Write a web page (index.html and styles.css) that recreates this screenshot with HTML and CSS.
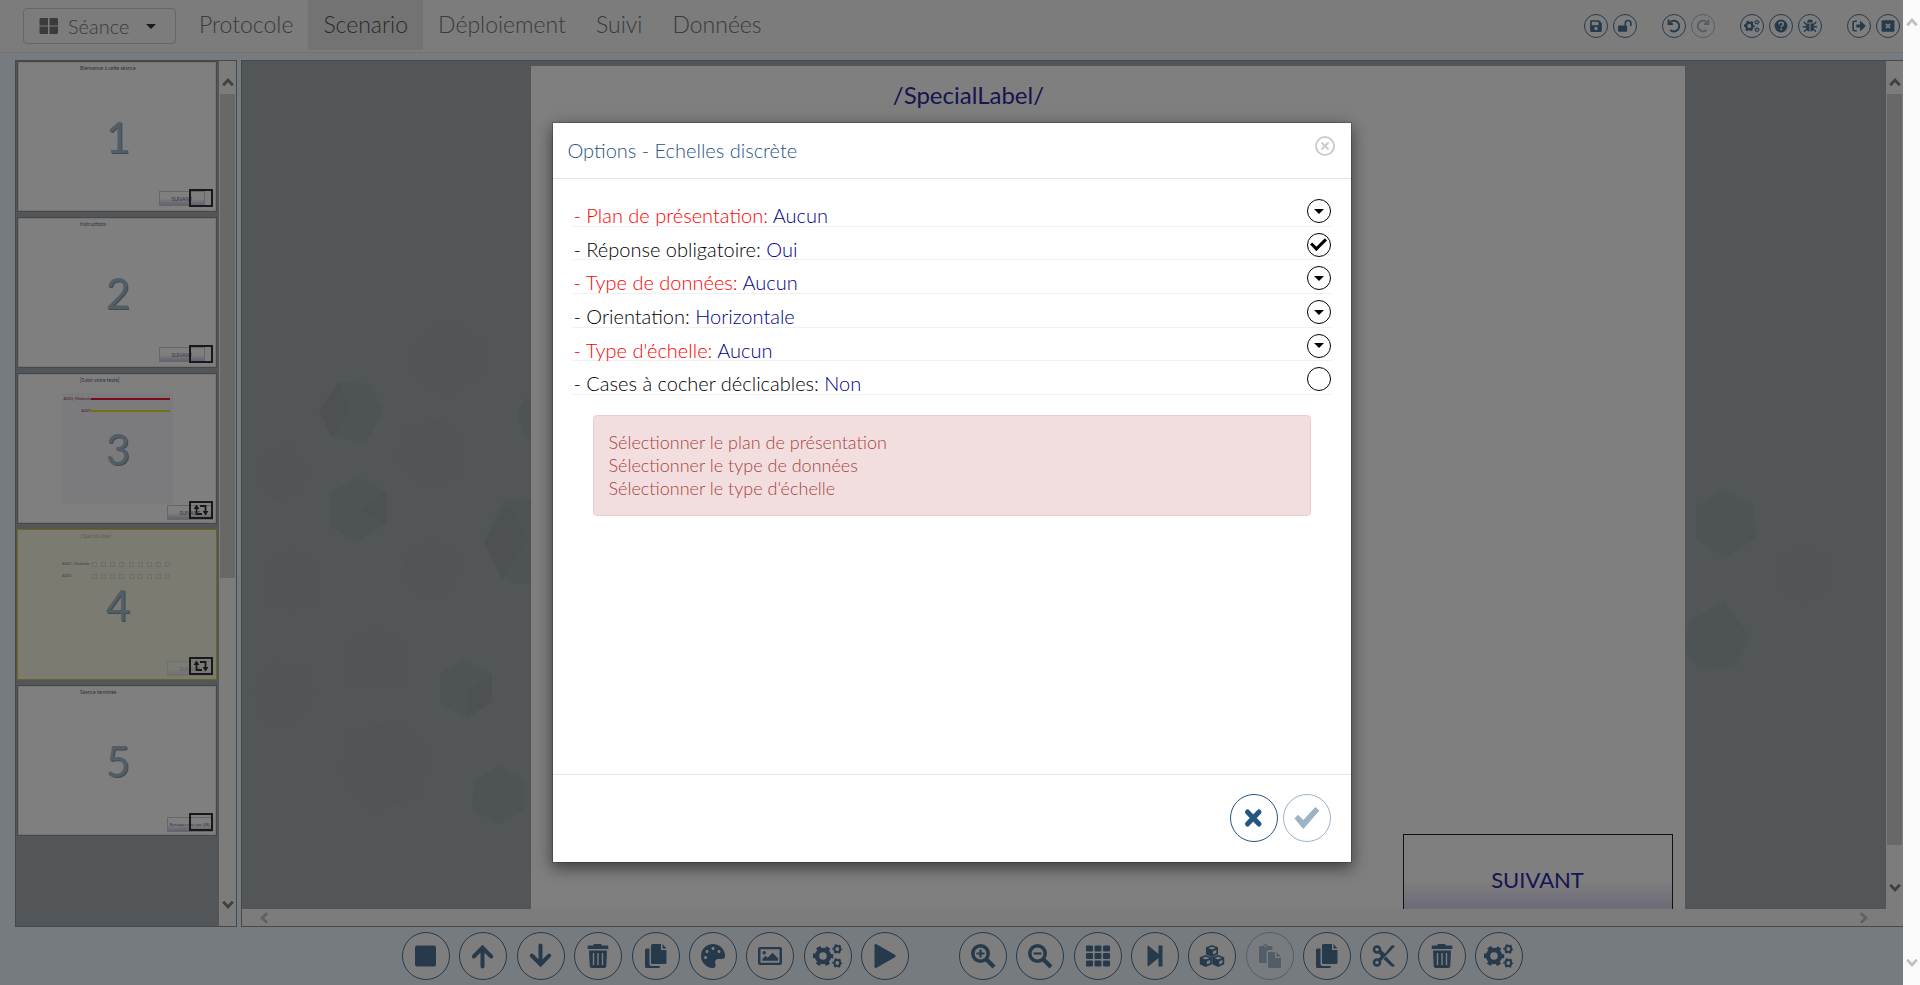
FILE: index.html
```html
<!DOCTYPE html>
<html lang="fr">
<head>
<meta charset="utf-8">
<meta name="viewport" content="width=device-width, initial-scale=1">
<title>Scenario</title>
<link rel="stylesheet" href="styles.css">
</head>
<body>
<svg class="sprite" aria-hidden="true">
  <symbol id="i-square" viewBox="0 0 30 30"><rect x="4" y="4.500" width="21" height="21" rx="2"/></symbol>
  <symbol id="i-up" viewBox="0 0 30 30"><path class="line" d="M14.500 25.500V7M5.800 15.500l8.700-8.800 8.700 8.800"/></symbol>
  <symbol id="i-down" viewBox="0 0 30 30"><path class="line" d="M14.500 4.500V23M5.800 14.500l8.700 8.800 8.700-8.800"/></symbol>
  <symbol id="i-trash" viewBox="0 0 30 30"><path fill-rule="evenodd" d="M11 3h7l1 1.500h5.500q.8 0 .8.800V8H4.700V5.300q0-.8.8-.8H10zM6 9.500h18L23.300 25q-.1 2-2 2H8.700q-1.900 0-2-2zM9.800 12v12h1.400V12zM14.300 12v12h1.400V12zM18.800 12v12h1.400V12z"/></symbol>
  <symbol id="i-copy" viewBox="0 0 30 30"><path d="M11.500 3H20v6h5.500v12.500q0 1.500-1.500 1.500H11.500q-1.500 0-1.500-1.500v-17Q10 3 11.500 3zM21.500 3l4 4.500h-4zM5.500 7.500H8.500V23q0 2 2 2h8.500v.500q0 1.500-1.500 1.500h-12Q4 27 4 25.500V9q0-1.500 1.500-1.500z"/></symbol>
  <symbol id="i-palette" viewBox="0 0 30 30"><path transform="translate(3 3) scale(.047)" d="M204.300 5C104.900 24.400 24.800 104.300 5.200 203.400c-37 187 131.700 326.400 258.800 306.700 41.200-6.400 61.400-54.600 42.500-91.700-23.100-45.400 9.900-98.400 60.900-98.400h79.700c35.800 0 64.800-29.600 64.900-65.300C511.500 97.100 368.100-26.900 204.300 5zM96 320c-17.700 0-32-14.300-32-32s14.300-32 32-32 32 14.300 32 32-14.300 32-32 32zm32-128c-17.700 0-32-14.300-32-32s14.300-32 32-32 32 14.300 32 32-14.300 32-32 32zm128-64c-17.700 0-32-14.300-32-32s14.300-32 32-32 32 14.300 32 32-14.300 32-32 32zm128 64c-17.700 0-32-14.300-32-32s14.300-32 32-32 32 14.300 32 32-14.300 32-32 32z"/></symbol>
  <symbol id="i-image" viewBox="0 0 30 30"><path fill-rule="evenodd" d="M5 6h20q2 0 2 2v14q0 2-2 2H5q-2 0-2-2V8q0-2 2-2zm.500 2.300v13.400h19V8.300z"/><circle cx="9.200" cy="11.800" r="1.800"/><path d="M7.500 19.800v-2l3-3 2 2 5-5 5.500 5.500v2.500z"/></symbol>
  <symbol id="i-gears" viewBox="0 0 30 30"><g fill="none" stroke="currentColor"><circle cx="10" cy="15" r="6" stroke-width="4.500"/><circle cx="10" cy="15" r="8.800" stroke-width="3" stroke-dasharray="4.400 4.815" stroke-dashoffset="2.200"/><circle cx="24.300" cy="8" r="2.900" stroke-width="2"/><circle cx="24.300" cy="8" r="4.200" stroke-width="1.500" stroke-dasharray="2 2.398" stroke-dashoffset="1"/><circle cx="24.300" cy="22" r="2.900" stroke-width="2"/><circle cx="24.300" cy="22" r="4.200" stroke-width="1.500" stroke-dasharray="2 2.398" stroke-dashoffset="1"/></g></symbol>
  <symbol id="i-play" viewBox="0 0 30 30"><path d="M4.500 4.500Q4.500 2.500 6.500 3.300L25 13.800q1.600 1.200 0 2.400L6.500 26.700q-2 .8-2-1.200z"/></symbol>
  <symbol id="i-zoomin" viewBox="0 0 30 30"><circle cx="12.500" cy="12.500" r="7.700" fill="none" stroke="currentColor" stroke-width="3.600"/><path d="M18 18l8 8" stroke="currentColor" stroke-width="4.200"/><path d="M12.500 8.500v8M8.500 12.500h8" stroke="currentColor" stroke-width="2.200"/></symbol>
  <symbol id="i-zoomout" viewBox="0 0 30 30"><circle cx="12.500" cy="12.500" r="7.700" fill="none" stroke="currentColor" stroke-width="3.600"/><path d="M18 18l8 8" stroke="currentColor" stroke-width="4.200"/><path d="M8.500 12.500h8" stroke="currentColor" stroke-width="2.200"/></symbol>
  <symbol id="i-grid" viewBox="0 0 30 30"><g><rect x="3" y="4.500" width="7" height="6" rx="1"/><rect x="11.500" y="4.500" width="7" height="6" rx="1"/><rect x="20" y="4.500" width="7" height="6" rx="1"/><rect x="3" y="12" width="7" height="6" rx="1"/><rect x="11.500" y="12" width="7" height="6" rx="1"/><rect x="20" y="12" width="7" height="6" rx="1"/><rect x="3" y="19.500" width="7" height="6" rx="1"/><rect x="11.500" y="19.500" width="7" height="6" rx="1"/><rect x="20" y="19.500" width="7" height="6" rx="1"/></g></symbol>
  <symbol id="i-step" viewBox="0 0 30 30"><path d="M7.500 5.500q0-1.500 1.300-.6L18.500 13V4.500h4v21h-4V17L8.800 25.100q-1.300.9-1.300-.6z"/></symbol>
  <symbol id="i-cubes" viewBox="0 0 30 30"><path fill-rule="evenodd" d="M15 4l6 2.300v6.900L15 16l-6-2.800V6.300zm0 1.700L11.200 7.100 15 8.500l3.800-1.400zM16 10.300v3.300l3.300-1.500V9z"/><path fill-rule="evenodd" d="M8.800 14l6 2.300v6.900l-6 2.800-6-2.800v-6.900zm0 1.700L5 17.100l3.800 1.400 3.800-1.400zM9.800 20.300v3.300l3.300-1.500V19z"/><path fill-rule="evenodd" d="M21.200 14l6 2.300v6.900l-6 2.800-6-2.800v-6.900zm0 1.700l-3.800 1.400 3.800 1.400 3.800-1.400zM22.200 20.300v3.300l3.300-1.500V19z"/></symbol>
  <symbol id="i-paste" viewBox="0 0 30 30"><path d="M5.500 5H8q.5-2 2.500-2T13 5h3q1.500 0 1.500 1.500V9H14q-2.500 0-2.500 2.500V22h-6Q4 22 4 20.500v-14Q4 5 5.500 5zM10.500 4.200a1 1 0 1 0 .01 0z" fill-rule="evenodd"/><path d="M14.500 11H20v6h6v8.500q0 1.500-1.500 1.500h-10q-1.500 0-1.500-1.500v-13q0-1.500 1.500-1.500zM21.500 11l4.500 4.500h-4.500z"/></symbol>
  <symbol id="i-cut" viewBox="0 0 30 30"><g fill="none" stroke="currentColor"><circle cx="8" cy="8.500" r="3" stroke-width="2.600"/><circle cx="8" cy="21.500" r="3" stroke-width="2.600"/></g><path d="M9 11.500L12 9l4 3.500L22 5q2-1.500 4 0L11.500 20.500 9 18.500l3-3.500zM17 15.500l9 9.500q-2 1.500-4 0l-7.500-7z"/></symbol>
  <symbol id="i-save" viewBox="0 0 30 30"><path transform="translate(4 2.500) scale(.049)" d="M433.900 129.900l-83.900-83.900A48 48 0 0 0 316.100 32H48C21.500 32 0 53.500 0 80v352c0 26.500 21.500 48 48 48h352c26.500 0 48-21.500 48-48V163.900a48 48 0 0 0-14.100-34zM224 416c-35.300 0-64-28.700-64-64s28.700-64 64-64 64 28.700 64 64-28.700 64-64 64zm96-304.500V212c0 6.600-5.400 12-12 12H76c-6.600 0-12-5.400-12-12V108c0-6.600 5.400-12 12-12h228.500c3.200 0 6.200 1.300 8.500 3.500l3.500 3.500a12 12 0 0 1 3.500 8.500z"/></symbol>
  <symbol id="i-unlock" viewBox="0 0 30 30"><rect x="2" y="14" width="17" height="12" rx="2"/><path d="M15.500 15v-5a5.200 5.200 0 0 1 10.500 0v4" fill="none" stroke="currentColor" stroke-width="3" stroke-linecap="round"/></symbol>
  <symbol id="i-undo" viewBox="0 0 30 30"><path d="M7 9a10 10 0 1 1 1 13.500" fill="none" stroke="currentColor" stroke-width="3.600"/><path d="M3 3h3.500v6.500H13V13H3z"/></symbol>
  <symbol id="i-redo" viewBox="0 0 30 30"><path d="M23 9a10 10 0 1 0-1 13.500" fill="none" stroke="currentColor" stroke-width="3.600"/><path d="M27 3h-3.500v6.500H17V13h10z"/></symbol>
  <symbol id="i-help" viewBox="0 0 30 30"><circle cx="15" cy="15" r="12"/><path class="cut" d="M10.800 12q.5-4 4.500-4 4 0 4 3.500 0 2-2.200 3.200-1.800 1-1.800 2.500"/><circle class="hole" cx="15.200" cy="21.200" r="2"/></symbol>
  <symbol id="i-bug" viewBox="0 0 30 30"><path d="M9.500 8.500a5.500 5.500 0 0 1 11 0zM8 10.500h6v15q-6-.5-6-7zM16 10.500h6v8q0 6.500-6 7z"/><path d="M8.500 12.500L4 8M21.500 12.500L26 8M9 16.500H2.500M21 16.500h6.500M9 20.500L4.500 25M21 20.500l4.500 4.500" stroke="currentColor" stroke-width="2.600" stroke-linecap="round"/></symbol>
  <symbol id="i-exit" viewBox="0 0 30 30"><path d="M11 6H6.500Q4 6 4 8.500v13Q4 24 6.500 24H11" fill="none" stroke="currentColor" stroke-width="3"/><path d="M10 12h7V6.500q0-2 1.600-.6L27 14q1 1 0 2l-8.400 8.100q-1.600 1.400-1.600-.6V18h-7z"/></symbol>
  <symbol id="i-close" viewBox="0 0 30 30"><rect x="3" y="4" width="24" height="22" rx="2"/><path class="cut" d="M11 11l8 8M19 11l-8 8"/></symbol>
  <symbol id="i-times" viewBox="0 0 30 30"><path d="M8.500 9l11.500 12M20 9L8.500 21" stroke="currentColor" stroke-width="5" stroke-linecap="round"/></symbol>
  <symbol id="i-check" viewBox="0 0 30 30"><path d="M3 15.500l3-3.200 5.300 5.300L23.500 4.500l3.300 3.200L11.300 25.500z" stroke="currentColor" stroke-linejoin="round"/></symbol>
  <symbol id="i-chevron" viewBox="0 0 12 10"><path d="M1.200 8.200L6 3l4.800 5.200" fill="none" stroke="currentColor" stroke-width="2.800"/></symbol>
  <symbol id="i-loop" viewBox="0 0 18 14"><path d="M4.500 5v6H10M8 3h5.500v6" fill="none" stroke="currentColor" stroke-width="1.800"/><path d="M4.500 1.500L7.500 6h-6zM13.500 12.500l-3-4.500h6z"/></symbol>
  <symbol id="i-windows" viewBox="0 0 20 16"><path d="M1.500 0H9v7.500H.500V1zM10.500 0H18l1 1v6.500h-8.500zM.500 8.500H9V16H1.500l-1-1zM10.500 8.500H19V15l-1 1h-7.500z"/></symbol>
</svg>

<div class="app">
  <header class="navbar">
    <button class="session" type="button"><svg class="icon-win"><use href="#i-windows"/></svg><span>Séance</span><span class="caret"></span></button>
    <nav class="menu">
      <a href="#protocole">Protocole</a>
      <a href="#scenario" class="active">Scenario</a>
      <a href="#deploiement">Déploiement</a>
      <a href="#suivi">Suivi</a>
      <a href="#donnees">Données</a>
    </nav>
    <div class="tools">
      <div class="tool-group">
        <button class="round small" type="button" aria-label="Enregistrer"><svg><use href="#i-save"/></svg></button>
        <button class="round small" type="button" aria-label="Déverrouiller"><svg><use href="#i-unlock"/></svg></button>
      </div>
      <div class="tool-group">
        <button class="round small" type="button" aria-label="Annuler"><svg><use href="#i-undo"/></svg></button>
        <button class="round small" type="button" aria-label="Rétablir" disabled><svg><use href="#i-redo"/></svg></button>
      </div>
      <div class="tool-group">
        <button class="round small" type="button" aria-label="Paramètres"><svg><use href="#i-gears"/></svg></button>
        <button class="round small" type="button" aria-label="Aide"><svg><use href="#i-help"/></svg></button>
        <button class="round small" type="button" aria-label="Signaler un bug"><svg><use href="#i-bug"/></svg></button>
      </div>
      <div class="tool-group">
        <button class="round small" type="button" aria-label="Sortir"><svg><use href="#i-exit"/></svg></button>
        <button class="round small" type="button" aria-label="Quitter"><svg><use href="#i-close"/></svg></button>
      </div>
    </div>
  </header>

  <main class="workspace">
    <aside class="slides">
      <div class="slide-list">
        <article class="slide"><span class="mini-title">Bienvenue à cette séance</span><span class="num">1</span><span class="mini-btn inner">SUIVANT</span><span class="badge"></span></article>
        <article class="slide"><span class="mini-title">Instructions</span><span class="num">2</span><span class="mini-btn inner">SUIVANT</span><span class="badge"></span></article>
        <article class="slide"><span class="mini-title">[Saisir votre texte]</span>
          <div class="scales"><span class="scale-name">A001_Moduolo</span><span class="bar red"></span><span class="scale-name">A001</span><span class="bar yellow"></span></div>
          <span class="num">3</span><span class="mini-btn">SUIVANT</span><span class="badge"><svg><use href="#i-loop"/></svg></span></article>
        <article class="slide selected"><span class="mini-title">/SpecialLabel/</span>
          <div class="scales boxes"><span class="scale-name">A001_Moduolo</span><span class="ticks"><i></i><i></i><i></i><i></i><i></i><i></i><i></i><i></i><i></i></span><span class="scale-name">A001</span><span class="ticks"><i></i><i></i><i></i><i></i><i></i><i></i><i></i><i></i><i></i></span></div>
          <span class="num">4</span><span class="mini-btn">SUIVANT</span><span class="badge"><svg><use href="#i-loop"/></svg></span></article>
        <article class="slide"><span class="mini-title">Séance terminée</span><span class="num">5</span><span class="mini-btn long">Renvoyer vers une URL</span><span class="badge"></span></article>
      </div>
      <div class="scroll-y"><svg class="chev"><use href="#i-chevron"/></svg><div class="rail"><div class="thumb short"></div></div><svg class="chev down"><use href="#i-chevron"/></svg></div>
    </aside>

    <section class="stage">
      <div class="stage-main">
        <div class="stage-view">
          <svg class="hexes" aria-hidden="true">
            <g transform="translate(-2 279) scale(.3333)">
              <g class="h-green"><path d="M508 20L620-60l120 70v70l-110 90-122-70zM50 370l90-60 60 70-20 80-80 20-45-60zM490 270l105-32 80 75-25 100-85 32-92-80zM500 640l80-50 80 60-20 100-80 32-76-70zM320 910l85-42 95 45v110H320zM40 1050l60-80 100 10 20 80-40 80-105 5zM330 1180l140-42 105 100-35 130-140 45-100-110zM75 680l75-48 82 40v110l-70 28-80-30z"/></g>
              <g class="h-blue"><path d="M298 125l94 7 40 83-57 93-100-16-37-82zM268 460l84-50 88 45-2 98-86 52-80-45zM790 482l80-6h60l70 130-80 120-105 5-83-125zM600 1000l72-42 84 42v85l-75 48-78-38zM700 1320l78-42 76 42v90l-78 42-78-42zM830 220l25-45h60v120h-60z"/></g>
              <g class="h-face"><path d="M298 125l34 80-57 87-37-82zM360 510l80-55-2 98zM800 490l70 100-83 130-52-112zM680 1055l76-55v85l-75 48z"/></g>
            </g>
            <g class="h-blue"><path d="M1454 446l26-18 32 15 2 34-30 20-30-18zM1450 558l32-18 26 36-14 30-36 2-20-20z"/></g>
            <g class="h-green"><path d="M1536 498l24-14 30 14v30l-28 14-26-16z"/></g>
          </svg>
          <div class="page">
            <h1>/SpecialLabel/</h1>
            <button class="next" type="button">SUIVANT</button>
          </div>
        </div>
        <div class="scroll-x"><svg class="chev left"><use href="#i-chevron"/></svg><svg class="chev right"><use href="#i-chevron"/></svg></div>
      </div>
      <div class="scroll-y wide"><svg class="chev"><use href="#i-chevron"/></svg><div class="rail"><div class="thumb"></div></div><svg class="chev down"><use href="#i-chevron"/></svg></div>
    </section>
  </main>

  <footer class="toolbar">
    <div class="bar-group first">
      <button class="round" type="button" aria-label="Nouveau"><svg><use href="#i-square"/></svg></button>
      <button class="round" type="button" aria-label="Monter"><svg><use href="#i-up"/></svg></button>
      <button class="round" type="button" aria-label="Descendre"><svg><use href="#i-down"/></svg></button>
      <button class="round" type="button" aria-label="Supprimer la page"><svg><use href="#i-trash"/></svg></button>
      <button class="round" type="button" aria-label="Dupliquer"><svg><use href="#i-copy"/></svg></button>
      <button class="round" type="button" aria-label="Couleurs"><svg><use href="#i-palette"/></svg></button>
      <button class="round" type="button" aria-label="Image"><svg><use href="#i-image"/></svg></button>
      <button class="round" type="button" aria-label="Options de la page"><svg><use href="#i-gears"/></svg></button>
      <button class="round" type="button" aria-label="Lecture"><svg><use href="#i-play"/></svg></button>
    </div>
    <div class="bar-group second">
      <button class="round" type="button" aria-label="Agrandir"><svg><use href="#i-zoomin"/></svg></button>
      <button class="round" type="button" aria-label="Réduire"><svg><use href="#i-zoomout"/></svg></button>
      <button class="round" type="button" aria-label="Grille"><svg><use href="#i-grid"/></svg></button>
      <button class="round" type="button" aria-label="Suivant"><svg><use href="#i-step"/></svg></button>
      <button class="round" type="button" aria-label="Objets"><svg><use href="#i-cubes"/></svg></button>
      <button class="round" type="button" aria-label="Coller" disabled><svg><use href="#i-paste"/></svg></button>
      <button class="round" type="button" aria-label="Copier"><svg><use href="#i-copy"/></svg></button>
      <button class="round" type="button" aria-label="Couper"><svg><use href="#i-cut"/></svg></button>
      <button class="round" type="button" aria-label="Supprimer l'objet"><svg><use href="#i-trash"/></svg></button>
      <button class="round" type="button" aria-label="Options de l'objet"><svg><use href="#i-gears"/></svg></button>
    </div>
  </footer>

  <div class="backdrop">
    <div class="dialog" role="dialog" aria-modal="true" aria-labelledby="dlg-title">
      <div class="dialog-head">
        <h2 id="dlg-title">Options - Echelles discrète</h2>
        <button class="dismiss" type="button" aria-label="Fermer"><svg viewBox="0 0 20 20"><circle cx="10" cy="10" r="9"/><path d="M6.500 6.500l7 7M13.500 6.500l-7 7"/></svg></button>
      </div>
      <div class="dialog-body">
        <div class="rows">
          <div class="row"><span class="missing" id="r1">- Plan de présentation: <b>Aucun</b></span><button class="pick" type="button" aria-labelledby="r1"><span class="caret"></span></button></div>
          <div class="row"><label for="c1">- Réponse obligatoire: <b>Oui</b></label><input class="tick" type="checkbox" id="c1" checked></div>
          <div class="row"><span class="missing" id="r3">- Type de données: <b>Aucun</b></span><button class="pick" type="button" aria-labelledby="r3"><span class="caret"></span></button></div>
          <div class="row"><span id="r4">- Orientation: <b>Horizontale</b></span><button class="pick" type="button" aria-labelledby="r4"><span class="caret"></span></button></div>
          <div class="row"><span class="missing" id="r5">- Type d'échelle: <b>Aucun</b></span><button class="pick" type="button" aria-labelledby="r5"><span class="caret"></span></button></div>
          <div class="row"><label for="c2">- Cases à cocher déclicables: <b>Non</b></label><input class="tick" type="checkbox" id="c2"></div>
        </div>
        <div class="alert" role="alert">
          <p>Sélectionner le plan de présentation</p>
          <p>Sélectionner le type de données</p>
          <p>Sélectionner le type d'échelle</p>
        </div>
      </div>
      <div class="dialog-foot">
        <button class="round clear" type="button" aria-label="Annuler les options"><svg><use href="#i-times"/></svg></button>
        <button class="round clear" type="button" aria-label="Valider" disabled><svg><use href="#i-check"/></svg></button>
      </div>
    </div>
  </div>
</div>
<div class="window-scroll"><svg class="chev"><use href="#i-chevron"/></svg><svg class="chev down"><use href="#i-chevron"/></svg></div>
</body>
</html>
```
FILE: styles.css
```css
* { box-sizing: border-box; }
body {
  margin: 0;
  display: flex;
  height: 100vh;
  overflow: hidden;
  font-family: Lato, "Open Sans", sans-serif;
  font-weight: 300;
  color: #000;
  background: #fff;
}
button { font: inherit; cursor: pointer; }
p, h1, h2 { margin: 0; font-weight: inherit; }
svg { fill: currentColor; display: block; }
.sprite { position: absolute; width: 0; height: 0; }
.line { fill: none; stroke: currentColor; stroke-width: 4; stroke-linecap: round; }
.cut { fill: none; stroke: #f8f8f8; stroke-width: 3; }
.hole { fill: #f8f8f8; }

.app {
  position: relative;
  flex: 1;
  min-width: 0;
  display: flex;
  flex-direction: column;
  background: #ecf6fe;
}

/* top bar */
.navbar {
  display: flex;
  height: 53px;
  padding: 0 3px 0 23px;
  background: #f8f8f8;
  border-bottom: 1px solid #e7e7e7;
}
.session {
  display: flex;
  align-items: center;
  gap: 9px;
  width: 153px;
  height: 36px;
  margin: 8px 8px 0 0;
  padding: 0 19px 0 15px;
  font-size: 20px;
  color: #777;
  background: none;
  border: 1px solid #ccc;
  border-radius: 4px;
}
.icon-win { width: 20px; height: 16px; color: #777; }
.caret {
  border: 5px solid transparent;
  border-top-color: #333;
  border-bottom: 0;
}
.session .caret { margin-left: auto; }
.menu { display: flex; }
.menu a {
  height: 50px;
  padding: 0 15px;
  line-height: 48px;
  font-size: 23px;
  color: #777;
  text-decoration: none;
}
.menu .active { color: #555; background: #e7e7e7; }
.tools { display: flex; gap: 25px; margin: 14px 0 0 auto; }
.tool-group { display: flex; gap: 5px; }

.round {
  display: flex;
  align-items: center;
  justify-content: center;
  width: 48px;
  height: 48px;
  padding: 0;
  color: #4c7496;
  background: #fdfdfd;
  border: 1px solid #4c7496;
  border-radius: 50%;
}
.round svg { width: 30px; height: 30px; }
.round:disabled { opacity: .45; }
.small { width: 24px; height: 24px; }
.small svg { width: 16px; height: 16px; }
.clear { color: #25567f; border-color: #25567f; background: #fff; }

/* work area */
.workspace {
  flex: 1;
  min-height: 0;
  display: flex;
  gap: 4px;
  padding: 7px 0 0 15px;
}
.slides {
  display: flex;
  width: 222px;
  background: #a4acb2;
  border: 1px solid #8c9296;
}
.slide-list { flex: 1; display: flex; flex-direction: column; gap: 5px; padding: 0 2px 0 1px; }
.slide {
  position: relative;
  display: flex;
  align-items: center;
  justify-content: center;
  height: 151px;
  background: #fff;
  border: 1px solid #909090;
  box-shadow: inset 0 0 0 1px #e8e8e8;
}
.slide.selected { background: #f6f6e4; border: 1px solid #e0c838; box-shadow: none; }
.num {
  position: relative;
  padding-left: 2px;
  font-size: 42px;
  font-weight: 400;
  line-height: 50px;
  color: #a4bccf;
  text-shadow: 1px 1px 0 #8a949c;
}
.mini-title { position: absolute; top: 3px; left: 62px; font-size: 5px; font-weight: 400; line-height: 6px; color: #667; }
.mini-btn {
  position: absolute;
  right: 3px;
  bottom: 3px;
  width: 46px;
  height: 15px;
  font-size: 5px;
  font-weight: 400;
  line-height: 14px;
  text-align: center;
  white-space: nowrap;
  color: #668;
  background: linear-gradient(#fff 50%, #c8c4e0);
  border: 1px solid #ccc;
}
.mini-btn.inner { right: 11px; bottom: 5px; }
.mini-btn.long { font-size: 4px; }
.selected .mini-btn, .selected .mini-title { opacity: .4; }
.badge {
  position: absolute;
  right: 3px;
  bottom: 4px;
  width: 24px;
  height: 18px;
  color: #333;
  border: 2px solid #333;
}
.badge svg { width: 20px; height: 14px; }
.scales {
  position: absolute;
  top: 19px;
  left: 44px;
  width: 111px;
  height: 111px;
  display: grid;
  grid-template-columns: 29px 79px;
  grid-template-rows: 12px 12px;
  align-items: center;
  font-size: 4px;
  font-weight: 400;
  line-height: 6px;
  color: #a03050;
  background: #f6f6fd;
}
.scale-name { justify-self: end; white-space: nowrap; }
.bar { height: 2px; }
.red { background: #f01830; }
.yellow { background: #e8e020; }
.scales.boxes { top: 28px; background: none; color: #889; }
.boxes .scale-name { justify-self: start; }
.ticks { display: flex; justify-content: space-between; padding-left: 1px; }
.ticks i { width: 5px; height: 5px; border: 1px solid #dcdcd0; }

/* scroll bars */
.scroll-y {
  width: 17px;
  display: flex;
  flex-direction: column;
  align-items: center;
  padding: 16px 0;
  background: #f8f8f8;
  color: #808080;
}
.chev { width: 12px; height: 10px; flex: none; }
.down { transform: rotate(180deg); }
.left { transform: rotate(-90deg); }
.right { transform: rotate(90deg); }
.rail { flex: 1; width: 15px; padding: 7px 0; }
.thumb { height: 96%; background: #d0d0d0; }
.thumb.short { height: 60.6%; }
.wide { padding-bottom: 33px; }

.stage {
  flex: 1;
  min-width: 0;
  display: flex;
  border: 1px solid #8c9296;
  border-right: 0;
  background: #a4acb2;
}
.stage-main { flex: 1; min-width: 0; display: flex; flex-direction: column; }
.stage-view {
  position: relative;
  flex: 1;
  min-height: 0;
  overflow: hidden;
  display: flex;
  justify-content: center;
  padding: 5px 0 0 87px;
}
.hexes { position: absolute; inset: 0; width: 100%; height: 100%; }
.h-green { fill: #a2aaae; }
.h-blue { fill: #9da7ad; }
.h-face { fill: #9ba3a9; }
.page {
  position: relative;
  display: flex;
  flex-direction: column;
  width: 75%;
  max-width: 1154px;
  height: 866px;
  flex: none;
  padding: 13px 12px 8px;
  background: #fff;
}
.page h1 { padding-left: 31%; font-size: 24px; font-weight: 400; line-height: 32px; color: #2e2aa0; }
.next {
  width: 270px;
  height: 90px;
  margin: auto 0 0 auto;
  font-size: 22px;
  font-weight: 400;
  color: #2e2aa0;
  background: linear-gradient(#fff 50%, #c8c4ea);
  border: 1px solid #222;
}
.scroll-x {
  height: 17px;
  display: flex;
  align-items: center;
  justify-content: space-between;
  padding: 0 16px;
  background: #f8f8f8;
  color: #c0c0c0;
}

/* bottom tools */
.toolbar {
  display: flex;
  justify-content: center;
  gap: 50px;
  padding: 5px 0 5px 22px;
}
.bar-group { display: flex; justify-content: space-between; }
.first { width: 507px; }
.second { width: 564px; }

/* dialog */
.backdrop {
  position: absolute;
  inset: 0;
  display: flex;
  justify-content: center;
  align-items: flex-start;
  padding-top: 122px;
  background: rgba(0, 0, 0, .5);
}
.dialog {
  width: 800px;
  max-width: 90%;
  background: #fff;
  background-clip: padding-box;
  border: 1px solid rgba(0, 0, 0, .2);
  box-shadow: 0 5px 15px rgba(0, 0, 0, .5);
}
.dialog-head {
  display: flex;
  justify-content: space-between;
  align-items: flex-start;
  padding: 13px 16px 13px 15px;
  border-bottom: 1px solid #e5e5e5;
}
.dialog-head h2 { font-size: 20px; line-height: 28px; padding-bottom: 1px; color: #25567f; }
.dismiss { width: 20px; height: 20px; padding: 0; border: 0; background: none; }
.dismiss svg { fill: none; stroke: #ccc; stroke-width: 2; }
.dialog-body { min-height: 595px; padding: 14px 20px; }
.rows { display: flex; flex-direction: column; height: 202px; }
.row {
  flex: 1;
  min-height: 0;
  display: flex;
  align-items: flex-start;
  justify-content: space-between;
  padding: 6px 0 0 1px;
  border-bottom: 1px solid #f0f0f0;
  font-size: 20px;
  line-height: 32px;
}
.row b { font-weight: inherit; color: #00008b; }
.missing { color: #f00; }
.pick, .tick {
  display: flex;
  align-items: center;
  justify-content: center;
  width: 24px;
  height: 24px;
  margin: 0;
  padding: 0;
  background: #fff;
  border: 1px solid #000;
  border-radius: 50%;
}
.pick .caret { border-width: 5px 5px 0; border-top-color: #000; }
.tick { appearance: none; }
.tick:checked::before {
  content: "";
  width: 12px;
  height: 6px;
  margin-bottom: 4px;
  border: solid #000;
  border-width: 0 0 3px 3px;
  transform: rotate(-45deg);
}
.alert {
  margin: 20px 20px 0;
  padding: 15px;
  font-size: 18px;
  line-height: 23px;
  color: #a94442;
  background: #f2dede;
  border: 1px solid #ebccd1;
  border-radius: 4px;
}
.dialog-foot {
  display: flex;
  justify-content: flex-end;
  gap: 5px;
  padding: 19px 20px 20px;
  border-top: 1px solid #e5e5e5;
}

.window-scroll {
  width: 17px;
  display: flex;
  flex-direction: column;
  justify-content: space-between;
  align-items: center;
  padding: 17px 0;
  background: #fafafa;
  color: #c0c0c0;
}
```
